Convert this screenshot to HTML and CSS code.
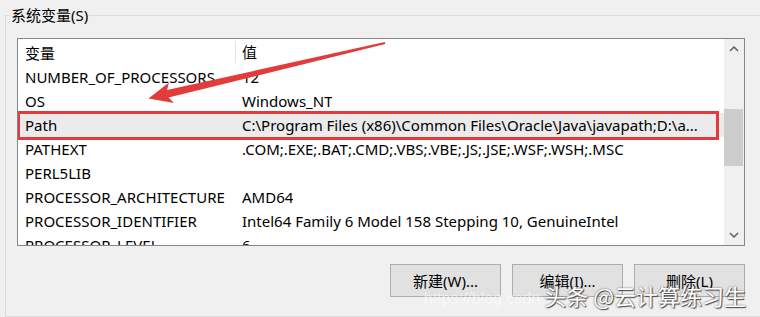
FILE: index.html
```html
<!DOCTYPE html>
<html lang="zh-CN">
<head>
    <meta charset="UTF-8">
    <title>系统变量</title>
    <link rel="stylesheet" href="styles.css">
</head>
<body>

    <div class="group">
        <div class="group_title">系统变量(S)</div>

        <div class="listbox">
            <div class="list_rows">
                <div class="row head">
                    <span class="cell name">变量</span>
                    <span class="cell value sep">值</span>
                </div>
                <div class="row"><span class="cell name">NUMBER_OF_PROCESSORS</span><span class="cell value">12</span></div>
                <div class="row"><span class="cell name">OS</span><span class="cell value">Windows_NT</span></div>
                <div class="row selected"><span class="cell name">Path</span><span class="cell value">C:\Program Files (x86)\Common Files\Oracle\Java\javapath;D:\a...</span></div>
                <div class="row"><span class="cell name">PATHEXT</span><span class="cell value">.COM;.EXE;.BAT;.CMD;.VBS;.VBE;.JS;.JSE;.WSF;.WSH;.MSC</span></div>
                <div class="row"><span class="cell name">PERL5LIB</span><span class="cell value"></span></div>
                <div class="row"><span class="cell name">PROCESSOR_ARCHITECTURE</span><span class="cell value">AMD64</span></div>
                <div class="row"><span class="cell name">PROCESSOR_IDENTIFIER</span><span class="cell value">Intel64 Family 6 Model 158 Stepping 10, GenuineIntel</span></div>
                <div class="row"><span class="cell name">PROCESSOR_LEVEL</span><span class="cell value">6</span></div>

                <!-- annotation box round the Path row -->
                <div class="mark_box"></div>
            </div>

            <div class="scrollbar">
                <span class="scroll_btn">
                    <svg width="10" height="6" viewBox="0 0 10 6"><path d="M1 5 L5 1 L9 5" fill="none" stroke="#606060" stroke-width="1.5"/></svg>
                </span>
                <div class="scroll_track">
                    <div class="scroll_thumb"></div>
                </div>
                <span class="scroll_btn">
                    <svg width="10" height="6" viewBox="0 0 10 6"><path d="M1 1 L5 5 L9 1" fill="none" stroke="#606060" stroke-width="1.5"/></svg>
                </span>
            </div>
        </div>

        <div class="buttons">
            <button class="btn">新建(W)...</button>
            <button class="btn">编辑(I)...</button>
            <button class="btn">删除(L)</button>
        </div>
    </div>

    <!-- red arrow drawn over the screenshot -->
    <svg class="arrow" width="760" height="317" viewBox="0 0 760 317">
        <polygon points="384.8,42.0 167.0,90.0 169.0,82.5 148.5,98.5 174.0,103.0 168.6,97.6 385.2,44.0" fill="#e33b3b"/>
    </svg>

    <div class="watermark">
        <span class="wm_url">https://blog.csdn</span>
        <span class="wm_text">头条 @云计算练习生</span>
    </div>

</body>
</html>
```

FILE: styles.css
```css
html, body{margin: 0; padding: 0;}
body{width: 760px; height: 317px; overflow: hidden; position: relative; background: #f0f0f0; font-family: "Noto Sans", "Noto Sans CJK SC", sans-serif; font-size: 15px; color: #000;}

.group{margin: 15px 0 0 5px; height: 300px; border-top: 1px solid #dcdcdc; border-left: 1px solid #dcdcdc; border-bottom: 1px solid #dcdcdc;}
.group_title{width: fit-content; margin: -11px 0 0 4px; padding: 0 1px; line-height: 20px; background: #f0f0f0;}

.listbox{display: flex; margin: 13px 15px 0 11px; height: 206px; border: 1px solid #828790; background: #fff; overflow: hidden;}
.list_rows{flex: 1 1 auto; position: relative; overflow: hidden;}

.row{display: flex; align-items: center; height: 24px; white-space: nowrap;}
.row.head{height: 26px;}
.row.selected{background: #ebebeb;}
.cell{display: block; overflow: hidden;}
.cell.name{width: 210px; flex: none; padding-left: 7px;}
.cell.value{padding-left: 7px;}
.cell.sep{border-left: 1px solid #e5e5e5; height: 22px; line-height: 22px; padding-left: 6px;}

.mark_box{position: absolute; left: -1px; top: 72px; width: 696px; height: 23px; border: 3px solid #e33b3b;}

.scrollbar{flex: none; width: 20px; display: flex; flex-direction: column; background: #f0f0f0;}
.scroll_btn{height: 20px; display: flex; align-items: center; justify-content: center;}
.scroll_track{flex: 1 1 auto; padding-top: 50px;}
.scroll_thumb{height: 57px; margin: 0 1px 0 0; background: #cdcdcd;}

.buttons{display: flex; justify-content: flex-end; gap: 11px; margin: 18px 15px 0 0;}
.btn{width: 111px; height: 33px; margin: 0; padding: 0; border: 1px solid #adadad; background: #e1e1e1; font-family: "Noto Sans", "Noto Sans CJK SC", sans-serif; font-size: 15px; color: #000;}

.arrow{position: absolute; left: 0; top: 0;}

.watermark{position: absolute; right: 14px; bottom: 9px; display: flex; align-items: flex-end; gap: 4px;}
.wm_url{font-size: 16px; color: rgba(255,255,255,0.55); font-family: "Liberation Sans", sans-serif;}
.wm_text{font-size: 22px; line-height: 26px; color: #fff; font-family: "Noto Sans CJK SC", sans-serif; text-shadow: 0 0 2px #555, 1px 1px 1px #444;}
```
